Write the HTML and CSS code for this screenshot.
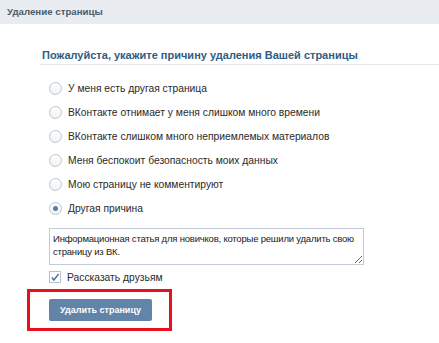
FILE: index.html
```html
<!DOCTYPE html>
<html>
<head>
    <title>Удаление страницы</title>
    <link rel="stylesheet" href="styles.css">
</head>
<body>

    <div class="header">Удаление страницы</div>

    <div class="content">
        <h2>Пожалуйста, укажите причину удаления Вашей страницы</h2>

        <div class="reasons">
            <label class="reason"><span class="radio"></span>У меня есть другая страница</label>
            <label class="reason"><span class="radio"></span>ВКонтакте отнимает у меня слишком много времени</label>
            <label class="reason"><span class="radio"></span>ВКонтакте слишком много неприемлемых материалов</label>
            <label class="reason"><span class="radio"></span>Меня беспокоит безопасность моих данных</label>
            <label class="reason"><span class="radio"></span>Мою страницу не комментируют</label>
            <label class="reason"><span class="radio checked"></span>Другая причина</label>
        </div>

        <textarea class="comment">Информационная статья для новичков, которые решили удалить свою страницу из ВК.</textarea>

        <label class="share">
            <span class="checkbox">
                <svg width="11" height="11" viewBox="0 0 11 11"><path d="M2 5.5 L4.3 8.3 L9.5 1.5" fill="none" stroke="#4a6f99" stroke-width="1.6"/></svg>
            </span>
            Рассказать друзьям
        </label>

        <div class="highlight">
            <button class="delete-btn">Удалить страницу</button>
        </div>
    </div>

</body>
</html>
```

FILE: styles.css
```css
body {
    font-family: "Liberation Sans", Arial, sans-serif;
    font-size: 10.3px;
    color: #2a2a2a;
    margin: 0;
    background-color: white;
}

.header {
    background-color: #e9edf1;
    color: #4b5b6b;
    font-weight: bold;
    font-size: 9.7px;
    height: 24px;
    line-height: 24px;
    padding-left: 7px;
}

.content {
    padding-left: 40px;
}

h2 {
    margin: 23px 0 0 0;
    padding: 0 0 1px 2px;
    font-size: 11px;
    line-height: 16px;
    color: #2f5b84;
    border-bottom: 1px solid #e6eaee;
}

.reasons {
    margin-top: 11px;
    padding-left: 9px;
}

.reason {
    display: flex;
    align-items: center;
    height: 24px;
}

.radio {
    width: 11px;
    height: 11px;
    border: 1px solid #bcc5cf;
    border-radius: 50%;
    background: linear-gradient(#ffffff, #f0f2f5);
    margin-right: 6px;
    display: flex;
    align-items: center;
    justify-content: center;
}

.radio.checked::after {
    content: "";
    width: 5px;
    height: 5px;
    border-radius: 50%;
    background-color: #5b7ea6;
}

.comment {
    display: block;
    box-sizing: border-box;
    margin: 8px 0 0 9px;
    width: 315px;
    height: 37px;
    padding: 3px 3px;
    border: 1px solid #c3ccd6;
    font-family: "Liberation Sans", Arial, sans-serif;
    font-size: 9.5px;
    letter-spacing: -0.2px;
    line-height: 13px;
    color: #222;
    resize: vertical;
}

.share {
    display: flex;
    align-items: center;
    height: 24px;
    padding-left: 9px;
}

.checkbox {
    width: 10px;
    height: 10px;
    border: 1px solid #b9c2cc;
    margin-right: 6px;
    display: flex;
}

.highlight {
    display: inline-block;
    margin-left: -13px;
    border: 3px solid #e8101c;
    padding: 7px 17px 7px 19px;
}

.delete-btn {
    display: block;
    width: 103px;
    height: 22px;
    border: none;
    border-radius: 2px;
    background-color: #6384a9;
    color: white;
    font-family: "Liberation Sans", Arial, sans-serif;
    font-weight: bold;
    font-size: 9px;
}
```
